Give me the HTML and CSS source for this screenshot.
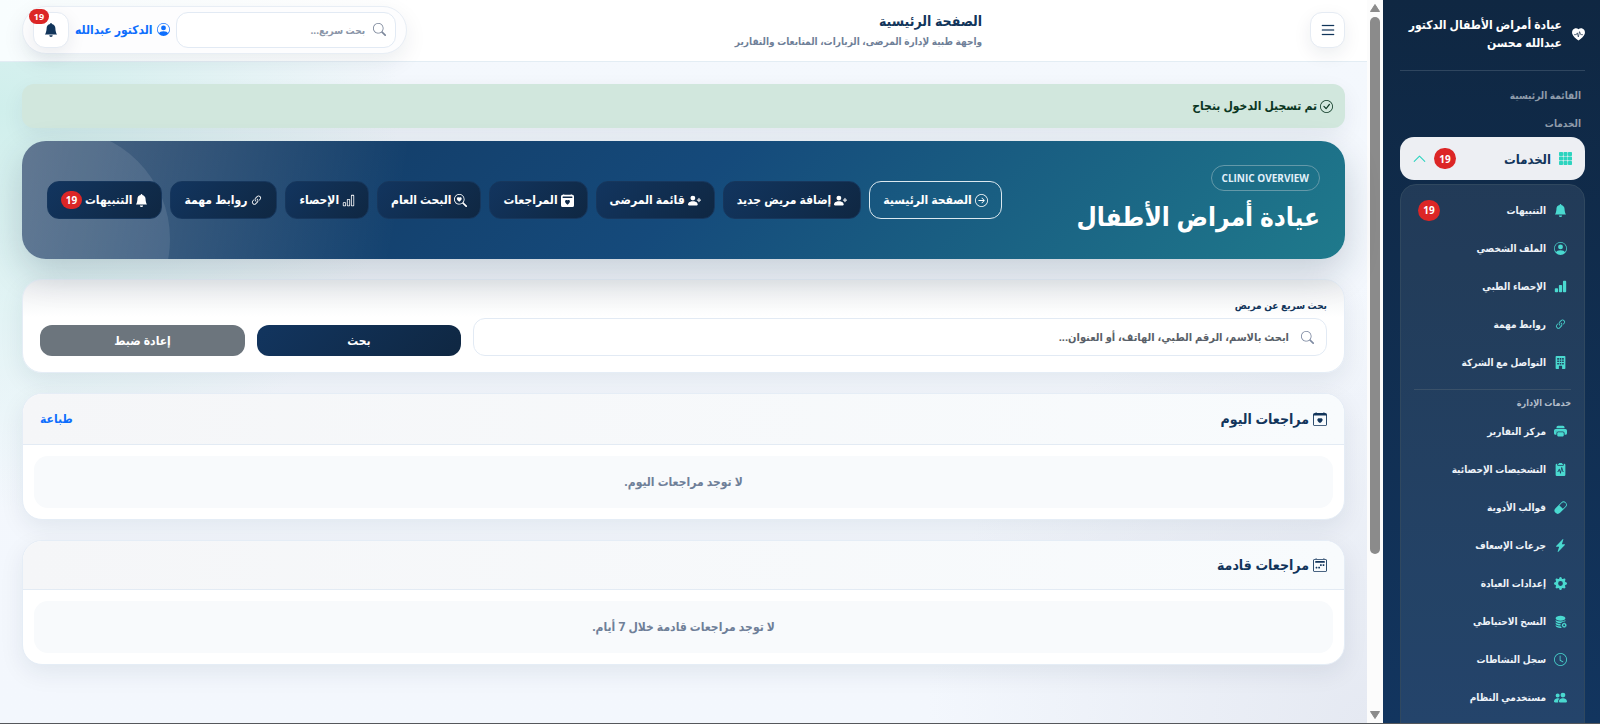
FILE: index.html
```html
<!DOCTYPE html>
<html lang="ar" dir="rtl">
<head>
<meta charset="utf-8">
<meta name="viewport" content="width=device-width, initial-scale=1">
<title>عيادة أمراض الأطفال</title>
<link rel="stylesheet" href="styles.css">
</head>
<body>
<svg class="sprite" aria-hidden="true">
  <symbol id="bell" viewBox="0 0 16 16"><path d="M8 16a2 2 0 0 0 2-2H6a2 2 0 0 0 2 2m.995-14.901a1 1 0 1 0-1.99 0A5 5 0 0 0 3 6c0 1.098-.5 6-2 7h14c-1.5-1-2-5.902-2-7 0-2.42-1.72-4.44-4.005-4.901"/></symbol>
  <symbol id="person" viewBox="0 0 16 16"><path d="M11 6a3 3 0 1 1-6 0 3 3 0 0 1 6 0"/><path fill-rule="evenodd" d="M0 8a8 8 0 1 1 16 0A8 8 0 0 1 0 8m8-7a7 7 0 0 0-5.468 11.37C3.242 11.226 4.805 10 8 10s4.757 1.225 5.468 2.37A7 7 0 0 0 8 1"/></symbol>
  <symbol id="bars-fill" viewBox="0 0 16 16"><path d="M1 11a1 1 0 0 1 1-1h2a1 1 0 0 1 1 1v3a1 1 0 0 1-1 1H2a1 1 0 0 1-1-1zm5-4a1 1 0 0 1 1-1h2a1 1 0 0 1 1 1v7a1 1 0 0 1-1 1H7a1 1 0 0 1-1-1zm5-5a1 1 0 0 1 1-1h2a1 1 0 0 1 1 1v12a1 1 0 0 1-1 1h-2a1 1 0 0 1-1-1z"/></symbol>
  <symbol id="bars" viewBox="0 0 16 16"><path fill-rule="evenodd" d="M4 11H2v3h2zm5-4H7v7h2zm5-5v12h-2V2zm-2-1a1 1 0 0 0-1 1v12a1 1 0 0 0 1 1h2a1 1 0 0 0 1-1V2a1 1 0 0 0-1-1zM6 7a1 1 0 0 1 1-1h2a1 1 0 0 1 1 1v7a1 1 0 0 1-1 1H7a1 1 0 0 1-1-1zm-5 4a1 1 0 0 1 1-1h2a1 1 0 0 1 1 1v3a1 1 0 0 1-1 1H2a1 1 0 0 1-1-1z"/></symbol>
  <symbol id="link" viewBox="0 0 16 16"><path d="M4.715 6.542 3.343 7.914a3 3 0 1 0 4.243 4.243l1.828-1.829A3 3 0 0 0 8.586 5.5L8 6.086a1 1 0 0 0-.154.199 2 2 0 0 1 .861 3.337L6.88 11.45a2 2 0 1 1-2.83-2.83l.793-.792a4 4 0 0 1-.128-1.287z"/><path d="M6.586 4.672A3 3 0 0 0 7.414 9.5l.775-.776a2 2 0 0 1-.896-3.346L9.12 3.55a2 2 0 1 1 2.83 2.83l-.793.792c.112.42.155.855.128 1.287l1.372-1.372a3 3 0 1 0-4.243-4.243z"/></symbol>
  <symbol id="building" viewBox="0 0 16 16"><path fill-rule="evenodd" d="M3 0a1 1 0 0 0-1 1v14a1 1 0 0 0 1 1h3v-3.5a.5.5 0 0 1 .5-.5h3a.5.5 0 0 1 .5.5V16h3a1 1 0 0 0 1-1V1a1 1 0 0 0-1-1zM4 2.500h2v2H4zm3 0h2v2H7zm3 0h2v2h-2zM4 5.500h2v2H4zm3 0h2v2H7zm3 0h2v2h-2zM4 8.500h2v2H4zm3 0h2v2H7zm3 0h2v2h-2z"/></symbol>
  <symbol id="printer" viewBox="0 0 16 16"><path d="M5 1a2 2 0 0 0-2 2v1h10V3a2 2 0 0 0-2-2zm6 8H5a1 1 0 0 0-1 1v3a1 1 0 0 0 1 1h6a1 1 0 0 0 1-1v-3a1 1 0 0 0-1-1"/><path d="M0 7a2 2 0 0 1 2-2h12a2 2 0 0 1 2 2v3a2 2 0 0 1-2 2h-1v-2a2 2 0 0 0-2-2H5a2 2 0 0 0-2 2v2H2a2 2 0 0 1-2-2zm2.500 1a.5.5 0 1 0 0-1 .5.5 0 0 0 0 1"/></symbol>
  <symbol id="clipboard" viewBox="0 0 16 16"><path d="M10 .5a.5.5 0 0 0-.5-.5h-3a.5.5 0 0 0-.5.5.5.5 0 0 1-.5.5.5.5 0 0 0-.5.5V2a.5.5 0 0 0 .5.5h5A.5.5 0 0 0 11 2v-.5a.5.5 0 0 0-.5-.5.5.5 0 0 1-.5-.5"/><path d="M4.085 1H3.500A1.500 1.500 0 0 0 2 2.500v12A1.500 1.500 0 0 0 3.500 16h9a1.500 1.500 0 0 0 1.500-1.500v-12A1.500 1.500 0 0 0 12.500 1h-.585q.084.236.085.5V2a1.500 1.500 0 0 1-1.500 1.500h-5A1.500 1.500 0 0 1 4 2v-.5q.001-.264.085-.5M9.980 5.356 11.372 10h.128a.5.5 0 0 1 0 1H11a.5.5 0 0 1-.479-.356l-.94-3.135-1.092 5.096a.5.5 0 0 1-.968.039L6.383 8.850l-.936 1.873A.5.5 0 0 1 5 11h-.5a.5.5 0 0 1 0-1h.191l1.362-2.724a.5.5 0 0 1 .926.080l.94 3.135 1.092-5.096a.5.5 0 0 1 .968-.039"/></symbol>
  <symbol id="capsule" viewBox="0 0 16 16"><path d="M1.828 8.900 8.900 1.827a4 4 0 1 1 5.657 5.657l-7.070 7.071A4 4 0 1 1 1.827 8.900Zm9.128.771 2.893-2.893a3 3 0 1 0-4.243-4.242L6.713 5.429z"/></symbol>
  <symbol id="bolt" viewBox="0 0 16 16"><path d="M11.251.068a.5.5 0 0 1 .227.580L9.677 6.500H13a.5.5 0 0 1 .364.843l-8 8.500a.5.5 0 0 1-.842-.490L6.323 9.500H3a.5.5 0 0 1-.364-.843l8-8.500a.5.5 0 0 1 .615-.090z"/></symbol>
  <symbol id="gear" viewBox="0 0 16 16"><path d="M9.405 1.050c-.413-1.400-2.397-1.400-2.810 0l-.1.340a1.464 1.464 0 0 1-2.105.872l-.31-.17c-1.283-.698-2.686.705-1.987 1.987l.169.311c.446.820.023 1.841-.872 2.105l-.34.100c-1.400.413-1.400 2.397 0 2.810l.34.100a1.464 1.464 0 0 1 .872 2.105l-.17.310c-.698 1.283.705 2.686 1.987 1.987l.311-.169a1.464 1.464 0 0 1 2.105.872l.1.340c.413 1.400 2.397 1.400 2.810 0l.1-.34a1.464 1.464 0 0 1 2.105-.872l.31.170c1.283.698 2.686-.705 1.987-1.987l-.169-.311a1.464 1.464 0 0 1 .872-2.105l.34-.1c1.400-.413 1.400-2.397 0-2.810l-.34-.1a1.464 1.464 0 0 1-.872-2.105l.17-.31c.698-1.283-.705-2.686-1.987-1.987l-.311.169a1.464 1.464 0 0 1-2.105-.872zM8 10.930a2.929 2.929 0 1 1 0-5.860 2.929 2.929 0 0 1 0 5.858z"/></symbol>
  <symbol id="database" viewBox="0 0 16 16"><path d="M8 1c-1.573 0-3.022.289-4.096.777C2.875 2.245 2 2.993 2 4s.875 1.755 1.904 2.223C4.978 6.711 6.427 7 8 7s3.022-.289 4.096-.777C13.125 5.755 14 5.007 14 4s-.875-1.755-1.904-2.223C11.022 1.289 9.573 1 8 1"/><path d="M2 7v-.839c.457.432 1.004.751 1.490.972C4.722 7.693 6.318 8 8 8s3.278-.307 4.510-.867c.486-.22 1.033-.54 1.490-.972V7c0 .424-.155.802-.411 1.133a4.510 4.510 0 0 0-4.815 1.843A12 12 0 0 1 8 10c-1.573 0-3.022-.289-4.096-.777C2.875 8.755 2 8.007 2 7m6.257 3.998L8 11c-1.682 0-3.278-.307-4.510-.867-.486-.22-1.033-.54-1.490-.972V10c0 1.007.875 1.755 1.904 2.223C4.978 12.711 6.427 13 8 13h.027a4.550 4.550 0 0 1 .23-2.002m-.002 3L8 14c-1.682 0-3.278-.307-4.510-.867-.486-.22-1.033-.54-1.490-.972V13c0 1.007.875 1.755 1.904 2.223C4.978 15.711 6.427 16 8 16c.536 0 1.058-.034 1.555-.097a4.500 4.500 0 0 1-1.300-1.905"/><path d="M12.500 9l.5 1 1-.3.3 1 1 .3-.3 1 1 .5-1 .5.3 1-1 .3-.3 1-1-.3-.5 1-.5-1-1 .3-.3-1-1-.3.3-1-1-.5 1-.5-.3-1 1-.3.3-1 1 .3zm0 2.250a1.250 1.250 0 1 0 0 2.500 1.250 1.250 0 0 0 0-2.500" fill-rule="evenodd"/></symbol>
  <symbol id="clock" viewBox="0 0 16 16"><path d="M8 3.500a.5.5 0 0 0-1 0V9a.5.5 0 0 0 .252.434l3.500 2a.5.5 0 0 0 .496-.868L8 8.710z"/><path d="M8 16A8 8 0 1 0 8 0a8 8 0 0 0 0 16m7-8A7 7 0 1 1 1 8a7 7 0 0 1 14 0"/></symbol>
  <symbol id="people" viewBox="0 0 16 16"><path d="M7 14s-1 0-1-1 1-4 5-4 5 3 5 4-1 1-1 1zm4-6a3 3 0 1 0 0-6 3 3 0 0 0 0 6m-5.784 6A2.240 2.240 0 0 1 5 13c0-1.355.680-2.750 1.936-3.720A6.300 6.300 0 0 0 5 9c-4 0-5 3-5 4s1 1 1 1zM4.500 8a2.500 2.500 0 1 0 0-5 2.500 2.500 0 0 0 0 5"/></symbol>
  <symbol id="heart-pulse" viewBox="0 0 16 16"><path d="M8 1.500C6 -.5 2.600 .1 1.100 2.300 0 3.900-.2 5.600.4 7.300 1.500 10.400 4.500 13 8 15.500c3.500-2.500 6.500-5.100 7.600-8.200.6-1.700.4-3.400-.7-5C13.400.1 10-.5 8 1.500"/><path d="M3 8.200h2.300L6.500 6l1.300 5 1.500-6.500 1.500 3.700H13" fill="none" stroke="#0f2742" stroke-width=".8" stroke-linecap="round" stroke-linejoin="round"/></symbol>
  <symbol id="grid" viewBox="0 0 16 16"><path d="M0 1a1 1 0 0 1 1-1h3a1 1 0 0 1 1 1v3a1 1 0 0 1-1 1H1a1 1 0 0 1-1-1zm5.500 0a1 1 0 0 1 1-1h3a1 1 0 0 1 1 1v3a1 1 0 0 1-1 1h-3a1 1 0 0 1-1-1zM11 1a1 1 0 0 1 1-1h3a1 1 0 0 1 1 1v3a1 1 0 0 1-1 1h-3a1 1 0 0 1-1-1zM0 6.500a1 1 0 0 1 1-1h3a1 1 0 0 1 1 1v3a1 1 0 0 1-1 1H1a1 1 0 0 1-1-1zm5.500 0a1 1 0 0 1 1-1h3a1 1 0 0 1 1 1v3a1 1 0 0 1-1 1h-3a1 1 0 0 1-1-1zm5.500 0a1 1 0 0 1 1-1h3a1 1 0 0 1 1 1v3a1 1 0 0 1-1 1h-3a1 1 0 0 1-1-1zM0 12a1 1 0 0 1 1-1h3a1 1 0 0 1 1 1v3a1 1 0 0 1-1 1H1a1 1 0 0 1-1-1zm5.500 0a1 1 0 0 1 1-1h3a1 1 0 0 1 1 1v3a1 1 0 0 1-1 1h-3a1 1 0 0 1-1-1zm5.500 0a1 1 0 0 1 1-1h3a1 1 0 0 1 1 1v3a1 1 0 0 1-1 1h-3a1 1 0 0 1-1-1z"/></symbol>
  <symbol id="chevron" viewBox="0 0 16 16"><path d="M1.500 11.500 8 5l6.500 6.500" fill="none" stroke="currentColor" stroke-width="1.300" stroke-linecap="round" stroke-linejoin="round"/></symbol>
  <symbol id="list" viewBox="0 0 16 16"><path d="M2.500 12a.5.5 0 0 1 .5-.5h10a.5.5 0 0 1 0 1H3a.5.5 0 0 1-.5-.5m0-4a.5.5 0 0 1 .5-.5h10a.5.5 0 0 1 0 1H3a.5.5 0 0 1-.5-.5m0-4a.5.5 0 0 1 .5-.5h10a.5.5 0 0 1 0 1H3a.5.5 0 0 1-.5-.5" stroke="currentColor" stroke-width=".2"/></symbol>
  <symbol id="search" viewBox="0 0 16 16"><path d="M11.742 10.344a6.500 6.500 0 1 0-1.397 1.398h-.001q.044.060.098.115l3.850 3.850a1 1 0 0 0 1.415-1.414l-3.850-3.850a1 1 0 0 0-.115-.1zM12 6.500a5.500 5.500 0 1 1-11 0 5.500 5.500 0 0 1 11 0"/></symbol>
  <symbol id="search-heart" viewBox="0 0 16 16"><path d="M6.500 4.482c1.664-1.673 5.825 1.254 0 5.018-5.825-3.764-1.664-6.690 0-5.018"/><path d="M13 6.500a6.470 6.470 0 0 1-1.258 3.844q.060.044.115.098l3.850 3.850a1 1 0 0 1-1.414 1.415l-3.850-3.850a1 1 0 0 1-.1-.115h.002A6.500 6.500 0 1 1 13 6.500M6.500 12a5.500 5.500 0 1 0 0-11 5.500 5.500 0 0 0 0 11"/></symbol>
  <symbol id="check" viewBox="0 0 16 16"><path d="M8 15A7 7 0 1 1 8 1a7 7 0 0 1 0 14m0 1A8 8 0 1 0 8 0a8 8 0 0 0 0 16"/><path d="m10.970 4.970-.020.022-3.473 4.425-2.093-2.094a.75.75 0 0 0-1.060 1.060L6.970 11.030a.75.75 0 0 0 1.079-.020l3.992-4.990a.75.75 0 0 0-1.071-1.050"/></symbol>
  <symbol id="arrow" viewBox="0 0 16 16"><path fill-rule="evenodd" d="M1 8a7 7 0 1 0 14 0A7 7 0 0 0 1 8m15 0A8 8 0 1 1 0 8a8 8 0 0 1 16 0M4.500 7.500a.5.5 0 0 0 0 1h5.793l-2.147 2.146a.5.5 0 0 0 .708.708l3-3a.5.5 0 0 0 0-.708l-3-3a.5.5 0 1 0-.708.708L10.293 7.500z"/></symbol>
  <symbol id="person-plus" viewBox="0 0 16 16"><path d="M1 14s-1 0-1-1 1-4 6-4 6 3 6 4-1 1-1 1zm5-6a3 3 0 1 0 0-6 3 3 0 0 0 0 6"/><path fill-rule="evenodd" d="M13.500 5a.5.5 0 0 1 .5.5V7h1.500a.5.5 0 0 1 0 1H14v1.500a.5.5 0 0 1-1 0V8h-1.500a.5.5 0 0 1 0-1H13V5.500a.5.5 0 0 1 .5-.5" stroke="currentColor" stroke-width=".4"/></symbol>
  <symbol id="cal-fill" viewBox="0 0 16 16"><path fill-rule="evenodd" d="M4 .5a.5.5 0 0 0-1 0V1H2a2 2 0 0 0-2 2v11a2 2 0 0 0 2 2h12a2 2 0 0 0 2-2V3a2 2 0 0 0-2-2h-1V.5a.5.5 0 0 0-1 0V1H4zM2 3.500a.5.5 0 0 1 .5-.5h11a.5.5 0 0 1 .5.5v1a.5.5 0 0 1-.5.5h-11a.5.5 0 0 1-.5-.5zm6 4.493c1.664-1.711 5.825 1.283 0 5.132-5.825-3.850-1.664-6.843 0-5.132"/></symbol>
  <symbol id="cal-heart" viewBox="0 0 16 16"><path fill-rule="evenodd" d="M4 .5a.5.5 0 0 0-1 0V1H2a2 2 0 0 0-2 2v11a2 2 0 0 0 2 2h12a2 2 0 0 0 2-2V3a2 2 0 0 0-2-2h-1V.5a.5.5 0 0 0-1 0V1H4zM1 4v10a1 1 0 0 0 1 1h12a1 1 0 0 0 1-1V4zm7 3.493c1.664-1.711 5.825 1.283 0 5.132-5.825-3.850-1.664-6.843 0-5.132"/></symbol>
  <symbol id="cal-week" viewBox="0 0 16 16"><path d="M3.500 0a.5.5 0 0 1 .5.5V1h8V.5a.5.5 0 0 1 1 0V1h1a2 2 0 0 1 2 2v11a2 2 0 0 1-2 2H2a2 2 0 0 1-2-2V3a2 2 0 0 1 2-2h1V.5a.5.5 0 0 1 .5-.5M2 2a1 1 0 0 0-1 1v11a1 1 0 0 0 1 1h12a1 1 0 0 0 1-1V3a1 1 0 0 0-1-1z"/><path d="M2.500 4a.5.5 0 0 1 .5-.5h10a.5.5 0 0 1 .5.5v1a.5.5 0 0 1-.5.5H3a.5.5 0 0 1-.5-.5zM11 7.500a.5.5 0 0 1 .5-.5h1a.5.5 0 0 1 .5.5v1a.5.5 0 0 1-.5.5h-1a.5.5 0 0 1-.5-.5zm-3 0a.5.5 0 0 1 .5-.5h1a.5.5 0 0 1 .5.5v1a.5.5 0 0 1-.5.5h-1a.5.5 0 0 1-.5-.5zm-5 3a.5.5 0 0 1 .5-.5h1a.5.5 0 0 1 .5.5v1a.5.5 0 0 1-.5.5h-1a.5.5 0 0 1-.5-.5zm3 0a.5.5 0 0 1 .5-.5h1a.5.5 0 0 1 .5.5v1a.5.5 0 0 1-.5.5h-1a.5.5 0 0 1-.5-.5z"/></symbol>
  <symbol id="triangle" viewBox="0 0 10 8"><path d="M5 .5 9.500 7.500H.5z" stroke="currentColor" stroke-linejoin="round"/></symbol>
</svg>

<aside class="sidebar">
  <div class="brand">
    <svg class="icon"><use href="#heart-pulse"/></svg>
    <span>عيادة أمراض الأطفال الدكتور عبدالله محسن</span>
  </div>
  <div class="side-label">القائمة الرئيسية</div>
  <div class="side-label">الخدمات</div>
  <button class="side-toggle" type="button" aria-expanded="true">
    <svg class="icon"><use href="#grid"/></svg>
    <span>الخدمات</span>
    <span class="count">19</span>
    <svg class="icon"><use href="#chevron"/></svg>
  </button>
  <nav class="submenu">
    <a href="#"><svg class="icon"><use href="#bell"/></svg><span>التنبيهات</span><span class="count">19</span></a>
    <a href="#"><svg class="icon"><use href="#person"/></svg><span>الملف الشخصي</span></a>
    <a href="#"><svg class="icon"><use href="#bars-fill"/></svg><span>الإحصاء الطبي</span></a>
    <a href="#"><svg class="icon"><use href="#link"/></svg><span>روابط مهمة</span></a>
    <a href="#"><svg class="icon"><use href="#building"/></svg><span>التواصل مع الشركة</span></a>
    <div class="submenu-label">خدمات الإدارة</div>
    <a href="#"><svg class="icon"><use href="#printer"/></svg><span>مركز التقارير</span></a>
    <a href="#"><svg class="icon"><use href="#clipboard"/></svg><span>التشخيصات الإحصائية</span></a>
    <a href="#"><svg class="icon"><use href="#capsule"/></svg><span>قوالب الأدوية</span></a>
    <a href="#"><svg class="icon"><use href="#bolt"/></svg><span>جرعات الإسعاف</span></a>
    <a href="#"><svg class="icon"><use href="#gear"/></svg><span>إعدادات العيادة</span></a>
    <a href="#"><svg class="icon"><use href="#database"/></svg><span>النسخ الاحتياطي</span></a>
    <a href="#"><svg class="icon"><use href="#clock"/></svg><span>سجل النشاطات</span></a>
    <a href="#"><svg class="icon"><use href="#people"/></svg><span>مستخدمي النظام</span></a>
  </nav>
</aside>

<div class="scrollbar" aria-hidden="true">
  <svg class="scroll-arrow"><use href="#triangle"/></svg>
  <div class="scroll-track"><div class="scroll-thumb"></div></div>
  <svg class="scroll-arrow down"><use href="#triangle"/></svg>
</div>

<div class="page">
  <header class="topbar">
    <button class="menu-button" type="button" aria-label="القائمة"><svg class="icon"><use href="#list"/></svg></button>
    <div class="page-title">
      <h1>الصفحة الرئيسية</h1>
      <p>واجهة طبية لإدارة المرضى، الزيارات، المتابعات والتقارير</p>
    </div>
    <div class="tools">
      <label class="quick-search">
        <svg class="icon"><use href="#search"/></svg>
        <input type="search" placeholder="بحث سريع..." aria-label="بحث سريع">
      </label>
      <a class="user" href="#"><svg class="icon"><use href="#person"/></svg>الدكتور عبدالله</a>
      <button class="bell-button" type="button" aria-label="التنبيهات">
        <svg class="icon"><use href="#bell"/></svg>
        <span class="bell-count">19</span>
      </button>
    </div>
  </header>

  <main class="content">
    <div class="alert" role="status"><svg class="icon"><use href="#check"/></svg>تم تسجيل الدخول بنجاح</div>

    <section class="hero">
      <div class="hero-text">
        <span class="eyebrow" dir="ltr">CLINIC OVERVIEW</span>
        <h2>عيادة أمراض الأطفال</h2>
      </div>
      <nav class="hero-nav">
        <a class="outlined" href="#"><svg class="icon"><use href="#arrow"/></svg>الصفحة الرئيسية</a>
        <a href="#"><svg class="icon"><use href="#person-plus"/></svg>إضافة مريض جديد</a>
        <a href="#"><svg class="icon"><use href="#person-plus"/></svg>قائمة المرضى</a>
        <a href="#"><svg class="icon"><use href="#cal-fill"/></svg>المراجعات</a>
        <a href="#"><svg class="icon"><use href="#search-heart"/></svg>البحث العام</a>
        <a href="#"><svg class="icon"><use href="#bars"/></svg>الإحصاء</a>
        <a href="#"><svg class="icon"><use href="#link"/></svg>روابط مهمة</a>
        <a href="#"><svg class="icon"><use href="#bell"/></svg>التنبيهات<span class="count">19</span></a>
      </nav>
    </section>

    <form class="card search-form">
      <div class="field">
        <label for="patient">بحث سريع عن مريض</label>
        <div class="input-wrap">
          <svg class="icon"><use href="#search"/></svg>
          <input id="patient" type="search" placeholder="ابحث بالاسم، الرقم الطبي، الهاتف، أو العنوان...">
        </div>
      </div>
      <button class="primary" type="button">بحث</button>
      <button class="secondary" type="reset">إعادة ضبط</button>
    </form>

    <section class="card">
      <div class="card-head">
        <h3><svg class="icon"><use href="#cal-heart"/></svg>مراجعات اليوم</h3>
        <a href="#">طباعة</a>
      </div>
      <p class="empty">لا توجد مراجعات اليوم.</p>
    </section>

    <section class="card">
      <div class="card-head">
        <h3><svg class="icon"><use href="#cal-week"/></svg>مراجعات قادمة</h3>
      </div>
      <p class="empty">لا توجد مراجعات قادمة خلال 7 أيام.</p>
    </section>
  </main>
</div>
</body>
</html>
```
FILE: styles.css
```css
* { box-sizing: border-box; }

body {
  margin: 0;
  height: 100vh;
  display: flex;
  overflow: hidden;
  border-bottom: 1px solid #55585c;
  font: bold 12px/18px "Open Sans", "DejaVu Sans Condensed", "DejaVu Sans", sans-serif;
  color: #12355b;
}

h1, h2, h3, p { margin: 0; }
a { text-decoration: none; }
button, input { font: inherit; }
button { cursor: pointer; }

.sprite { position: absolute; width: 0; height: 0; }
.icon { width: 13px; height: 13px; flex: none; fill: currentColor; }

.count {
  display: flex;
  align-items: center;
  justify-content: center;
  width: 22px;
  height: 21px;
  border-radius: 11px;
  background: #dc2626;
  color: #fff;
  font-size: 10px;
}

/* Sidebar */
.sidebar {
  flex: none;
  width: 217px;
  padding: 16px 15px 0 17px;
  overflow: hidden;
  background: linear-gradient(#0f2742, #12355f);
}

.brand {
  display: flex;
  align-items: center;
  gap: 10px;
  padding-bottom: 18px;
  margin-bottom: 15px;
  border-bottom: 1px solid #2f465f;
  color: #fff;
  font-size: 12px;
}

.side-label {
  padding: 0 4px;
  margin-bottom: 10px;
  color: #8f9cab;
  font-size: 10px;
}

.side-toggle {
  display: flex;
  align-items: center;
  width: 100%;
  height: 43px;
  margin: -5px 0 4px;
  padding: 0 13px;
  gap: 8px;
  border: 0;
  border-radius: 14px;
  background: #edeff3;
  color: #12355b;
  font-size: 13px;
}
.side-toggle .icon { color: #2dd4bf; }
.side-toggle .count { margin-inline-start: auto; }

.submenu {
  height: 100%;
  padding: 6px 13px;
  border: 1px solid #30485f;
  border-radius: 16px;
  background: rgba(255, 255, 255, .08);
}
.submenu a {
  display: flex;
  align-items: center;
  gap: 8px;
  height: 38px;
  padding: 0 4px;
  color: #edf2f8;
  font-size: 10px;
}
.submenu .icon { color: #4ad9d0; }
.submenu .count { margin-inline-start: auto; }
.submenu-label {
  margin-top: 8px;
  padding-top: 4px;
  border-top: 1px solid #3a5169;
  color: #b4becb;
  font-size: 9px;
}

/* Scrollbar */
.scrollbar {
  flex: none;
  display: flex;
  flex-direction: column;
  align-items: center;
  width: 16px;
  padding: 4px 0;
  gap: 5px;
  background: #fcfcfc;
  color: #8b8b8b;
}
.scroll-arrow { width: 10px; height: 8px; fill: currentColor; }
.down { transform: rotate(180deg); }
.scroll-track { flex: 1; width: 10px; }
.scroll-thumb { height: 78%; border-radius: 5px; background: currentColor; }

/* Page */
.page {
  flex: 1;
  min-width: 0;
  background:
    radial-gradient(circle at 0 15%, #d0efec, transparent 400px),
    radial-gradient(circle at 100% 100%, #e5e9f2, transparent 440px),
    linear-gradient(#f4f8fd, #f3f7fd);
}

.topbar {
  display: flex;
  align-items: center;
  justify-content: space-between;
  height: 62px;
  padding: 0 22px 2px;
  border-bottom: 1px solid #e3edf4;
  background: linear-gradient(90deg, #f8fdfe, #fff 30%);
}

.menu-button, .bell-button {
  display: flex;
  align-items: center;
  justify-content: center;
  height: 36px;
  padding: 0;
  border: 1px solid #e5ebf3;
  border-radius: 12px;
  background: #fff;
  color: #12355b;
  box-shadow: 0 6px 18px rgba(15, 39, 66, .08);
}
.menu-button { width: 35px; }
.menu-button .icon { width: 18px; height: 18px; }

.page-title h1 { font-size: 14px; line-height: 22px; }
.page-title p { color: #6f7f98; font-size: 10px; }

.tools {
  display: flex;
  align-items: center;
  gap: 6px;
  width: 385px;
  padding: 5px 10px;
  border: 1px solid #e8eef5;
  border-radius: 25px;
  background: #fdfdfe;
  box-shadow: 0 8px 22px rgba(15, 39, 66, .08);
}

.quick-search, .input-wrap {
  display: flex;
  align-items: center;
  border: 1px solid #e2eaf4;
  border-radius: 12px;
  background: #fff;
}
.quick-search { flex: 1; min-width: 0; height: 36px; padding: 0 9px; gap: 8px; color: #7c879b; }
.quick-search input, .input-wrap input {
  flex: 1;
  min-width: 0;
  padding: 0;
  border: 0;
  outline: 0;
  background: none;
}
.quick-search input { font-size: 10px; }
.quick-search input::placeholder { color: #8a95a8; }

.user { display: flex; align-items: center; gap: 4px; color: #0d6efd; }
.bell-button { position: relative; width: 36px; }
.bell-button .icon { width: 14px; height: 14px; }
.bell-count {
  position: absolute;
  top: -4px;
  right: 19px;
  width: 20px;
  border-radius: 8px;
  background: #dc2626;
  color: #fff;
  font-size: 9px;
  line-height: 15px;
}

.content { padding: 22px; }

.alert {
  display: flex;
  align-items: center;
  gap: 3px;
  height: 44px;
  padding: 0 12px;
  margin-bottom: 13px;
  border-radius: 12px;
  background: #d1e7dd;
  color: #0a3622;
  box-shadow: 0 8px 22px rgba(15, 39, 66, .07);
}

.hero {
  position: relative;
  display: flex;
  align-items: center;
  justify-content: space-between;
  height: 118px;
  padding: 0 25px;
  margin-bottom: 20px;
  border-radius: 24px;
  overflow: hidden;
  background:
    linear-gradient(100deg, rgba(255, 255, 255, .26), transparent 29%),
    linear-gradient(135deg, #12345b, #154a7b 50%, #1f7a8c);
  color: #fff;
  box-shadow: 0 14px 36px rgba(15, 39, 66, .2);
}
.hero::after {
  content: "";
  position: absolute;
  left: -72px;
  top: -12px;
  width: 220px;
  height: 220px;
  border-radius: 50%;
  background: rgba(255, 255, 255, .1);
}
.eyebrow {
  display: inline-block;
  padding: 3px 10px;
  border: 1px solid #6499a9;
  border-radius: 13px;
  color: #e2f0fa;
  font-size: 10px;
}
.hero-text h2 { margin-top: 6px; font-size: 26px; line-height: 38px; }

.hero-nav { position: relative; z-index: 1; display: flex; gap: 8px; }
.hero-nav a {
  display: flex;
  align-items: center;
  gap: 3px;
  height: 38px;
  padding: 0 13px;
  border: 1px solid #17375d;
  border-radius: 12px;
  background: linear-gradient(135deg, #12355f, #0f2742);
  color: #fff;
  white-space: nowrap;
}
.hero-nav .outlined { border-color: #dbe8ef; background: none; }
.hero-nav .count { height: 18px; width: 21px; }

.card {
  margin-bottom: 20px;
  border: 1px solid #e5edf6;
  border-radius: 20px;
  background: #fff;
  overflow: hidden;
  box-shadow: 0 8px 24px rgba(15, 39, 66, .08);
}

.search-form {
  display: grid;
  grid-template-columns: 1fr 204px 205px;
  align-items: end;
  gap: 12px;
  padding: 16px 17px;
  background: linear-gradient(#eceef0, #fff 40%);
}
.field label { display: block; margin-bottom: 4px; font-size: 10px; }
.input-wrap { height: 38px; padding: 0 12px; gap: 12px; color: #7f8ba3; }
.input-wrap input { font-size: 11px; }
.input-wrap input::placeholder { color: #595f68; }
.search-form button {
  height: 31px;
  padding: 0;
  border: 0;
  border-radius: 12px;
  color: #fff;
}
.primary { background: linear-gradient(135deg, #12355f, #0f2742); }
.secondary { background: #6c757d; }

.card-head {
  display: flex;
  align-items: center;
  justify-content: space-between;
  padding: 15px 17px;
  border-bottom: 1px solid #e3ebf4;
  background: linear-gradient(90deg, #f5f6f8, #f8fbfd);
}
.card-head h3 { display: flex; align-items: center; gap: 4px; font-size: 14px; }
.card-head .icon { width: 14px; height: 14px; }
.card-head a { color: #0d6efd; line-height: 20px; }
.empty {
  margin: 11px;
  padding: 17px;
  border-radius: 14px;
  background: #f8fafc;
  color: #6f7f98;
  text-align: center;
}
```
